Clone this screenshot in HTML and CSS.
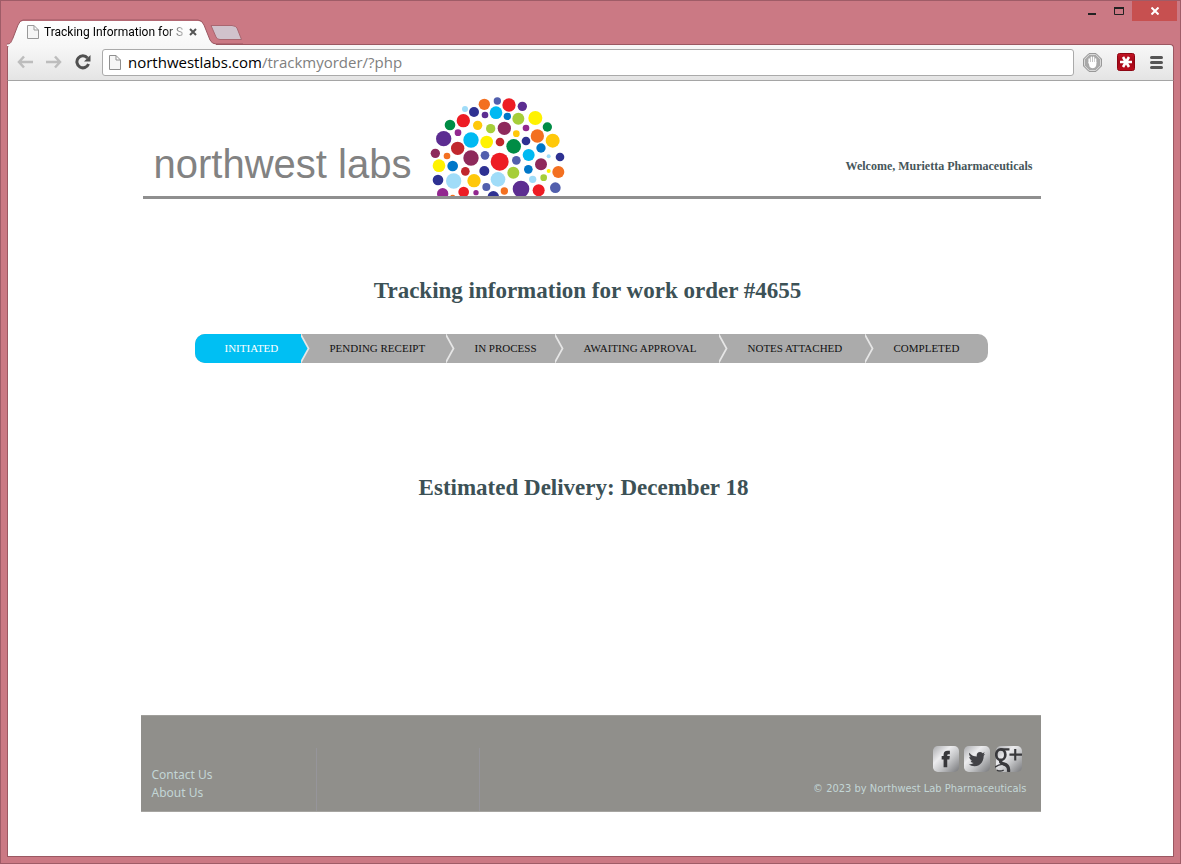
FILE: index.html
```html
<!DOCTYPE html>
<html lang="en">
<head>
<meta charset="utf-8">
<title>Tracking Information for S</title>
<link rel="stylesheet" href="styles.css">
</head>
<body>
<div class="window">
  <div class="titlebar">
    <div class="tabs">
      <svg class="tab-shape" width="236" height="27" viewBox="0 0 236 27" aria-hidden="true">
        <defs><linearGradient id="tabfill" x1="0" y1="0" x2="0" y2="1"><stop offset="0" stop-color="#fff"/><stop offset="1" stop-color="#f7f7f7"/></linearGradient></defs>
        <path d="M0 25C4 25 4 23 6 19L11 6Q13 2 16 2H191Q195 2 197 6L203 21Q205 25 209 25V27H0Z" fill="url(#tabfill)"/>
        <path d="M0 25C4 25 4 23 6 19L11 6Q13 1 16 1H191Q195 1 197 6L203 21Q205 25 209 25H236" fill="none" stroke="#9b5862"/>
        <path d="M204 6.500H225Q229 7 230 9L234.500 20.500H213Q210 20.500 209 18Z" fill="#d0c2cc" stroke="#a96670"/>
      </svg>
      <div class="tab">
        <svg width="12" height="14" viewBox="0 0 12 14" aria-hidden="true"><path d="M.5.5H7L11.500 5V13.500H.5ZM7 .5V5H11.500" fill="#f6f6f6" stroke="#999"/></svg>
        <span class="tab-title">Tracking Information for S</span>
        <button class="plain" aria-label="Close tab"><svg width="8" height="8" viewBox="0 0 8 8"><path d="M1 1L7 7M7 1L1 7" stroke="#555" stroke-width="2"/></svg></button>
      </div>
    </div>
    <div class="controls">
      <button class="control" aria-label="Minimize"><svg width="8" height="12" viewBox="0 0 8 12"><path d="M0 9H8" stroke="#222" stroke-width="2"/></svg></button>
      <button class="control" aria-label="Maximize"><svg width="10" height="8" viewBox="0 0 10 8"><path d="M.5 1H9.500V7.500H.5Z" fill="none" stroke="#222"/><path d="M0 1H10" stroke="#222" stroke-width="2"/></svg></button>
      <button class="control close" aria-label="Close"><svg width="8" height="8" viewBox="0 0 8 8"><path d="M.5 .5L7.500 7.500M7.500 .5L.5 7.500" stroke="#fff" stroke-width="2"/></svg></button>
    </div>
  </div>
  <div class="toolbar">
    <button class="plain" aria-label="Back"><svg width="16" height="14" viewBox="0 0 16 14"><path d="M7 1.500L2 7L7 12.500M2 7H16" fill="none" stroke="#bdbdbd" stroke-width="2.500"/></svg></button>
    <button class="plain" aria-label="Forward"><svg width="16" height="14" viewBox="0 0 16 14"><path d="M9 1.500L14 7L9 12.500M14 7H0" fill="none" stroke="#bdbdbd" stroke-width="2.500"/></svg></button>
    <button class="plain" aria-label="Reload"><svg width="16" height="16" viewBox="0 0 16 16"><path d="M12.500 4A6 6 0 1 0 13.500 10" fill="none" stroke="#505050" stroke-width="3"/><path d="M15.500 1V7.500H9Z" fill="#505050"/></svg></button>
    <div class="address">
      <svg width="12" height="15" viewBox="0 0 12 15" aria-hidden="true"><path d="M.5.5H7L11.500 5V14.500H.5ZM7 .5V5H11.500" fill="#f6f6f6" stroke="#8f8f8f"/></svg>
      <span class="url" role="textbox" aria-label="Address" contenteditable="true" spellcheck="false">northwestlabs.com<span class="path">/trackmyorder/?php</span></span>
    </div>
    <div class="extensions">
      <button class="plain" aria-label="Ad blocker"><svg width="19" height="19" viewBox="0 0 19 19"><path d="M6 .5H13L18.500 6V13L13 18.500H6L.5 13V6Z" fill="#a9a9a9" stroke="#999"/><path d="M6.400 1.500H12.600L17.500 6.400V12.600L12.600 17.500H6.400L1.500 12.600V6.400Z" fill="none" stroke="#d9d9d9"/><path d="M6.200 10V6M8.400 9V4.200M10.600 9V4.200M12.600 10V6" stroke="#fff" stroke-width="1.500" stroke-linecap="round"/><path d="M5.500 9H13.300V12Q12.500 15.300 9.500 15.300Q7.500 15.300 6.500 13.500Z" fill="#fff"/></svg></button>
      <button class="plain" aria-label="Password manager"><svg width="18" height="18" viewBox="0 0 18 18"><defs><linearGradient id="red" x1="0" y1="0" x2="0" y2="1"><stop offset="0" stop-color="#c41424"/><stop offset=".5" stop-color="#a20718"/><stop offset="1" stop-color="#bd0d1d"/></linearGradient></defs><rect x=".5" y=".5" width="17" height="17" rx="2" fill="url(#red)" stroke="#8d0613"/><path d="M3 9H15M6 4L12 14M12 4L6 14" stroke="#fff" stroke-width="2.600"/></svg></button>
      <button class="plain" aria-label="Menu"><svg width="13" height="13" viewBox="0 0 13 13"><path d="M1.500 1.500H11.500M1.500 6.500H11.500M1.500 11.500H11.500" stroke="#555" stroke-width="3" stroke-linecap="round"/></svg></button>
    </div>
  </div>
  <div class="viewport">
    <div class="page">
      <header class="header">
        <div class="brand">northwest labs</div>
        <svg class="dots" width="145" height="106" viewBox="0 0 435 318" role="img" aria-label="Northwest Labs">
          <g fill="#f37021"><circle cx="178" cy="43" r="17"/><circle cx="337" cy="138" r="20"/><circle cx="66" cy="198" r="10"/><circle cx="400" cy="246" r="18"/><circle cx="238" cy="303" r="11"/><circle cx="83" cy="322" r="8"/></g>
          <g fill="#ed1c24"><circle cx="252" cy="45" r="20"/><circle cx="115" cy="92" r="20"/><circle cx="224" cy="215" r="27"/><circle cx="116" cy="306" r="16"/><circle cx="341" cy="301" r="18"/></g>
          <g fill="#c1272d"><circle cx="225" cy="156" r="13"/><circle cx="98" cy="175" r="20"/><circle cx="121" cy="244" r="13"/></g>
          <g fill="#5c2d91"><circle cx="292" cy="49" r="14"/><circle cx="180" cy="75" r="10"/><circle cx="56" cy="146" r="23"/><circle cx="288" cy="297" r="25"/></g>
          <g fill="#525fad"><circle cx="217" cy="33" r="11"/><circle cx="180" cy="196" r="13"/><circle cx="274" cy="211" r="13"/><circle cx="184" cy="291" r="12"/><circle cx="391" cy="293" r="16"/></g>
          <g fill="#2e3192"><circle cx="147" cy="66" r="15"/><circle cx="303" cy="153" r="13"/><circle cx="405" cy="201" r="13"/><circle cx="178" cy="243" r="15"/><circle cx="39" cy="270" r="16"/><circle cx="205" cy="320" r="17"/></g>
          <g fill="#00b9f2"><circle cx="213" cy="68" r="19"/><circle cx="138" cy="150" r="23"/><circle cx="311" cy="195" r="18"/></g>
          <g fill="#0077c8"><circle cx="247" cy="79" r="11"/><circle cx="348" cy="174" r="14"/><circle cx="83" cy="228" r="16"/><circle cx="310" cy="238" r="13"/></g>
          <g fill="#a0dcf8"><circle cx="120" cy="57" r="9"/><circle cx="371" cy="199" r="6"/><circle cx="86" cy="273" r="23"/><circle cx="219" cy="268" r="22"/><circle cx="323" cy="268" r="11"/></g>
          <g fill="#a6ce39"><circle cx="280" cy="86" r="18"/><circle cx="197" cy="116" r="14"/><circle cx="265" cy="248" r="18"/><circle cx="356" cy="263" r="10"/></g>
          <g fill="#fff200"><circle cx="331" cy="84" r="21"/><circle cx="185" cy="156" r="19"/><circle cx="42" cy="227" r="19"/><circle cx="371" cy="243" r="6"/></g>
          <g fill="#ffc80a"><circle cx="158" cy="106" r="14"/><circle cx="274" cy="131" r="10"/><circle cx="383" cy="152" r="21"/><circle cx="147" cy="272" r="20"/></g>
          <g fill="#008c45"><circle cx="75" cy="105" r="16"/><circle cx="367" cy="111" r="14"/><circle cx="266" cy="169" r="22"/></g>
          <g fill="#8e2a5b"><circle cx="238" cy="115" r="20"/><circle cx="31" cy="190" r="14"/><circle cx="138" cy="204" r="23"/><circle cx="348" cy="223" r="18"/></g>
          <g fill="#92278f"><circle cx="99" cy="128" r="10"/><circle cx="303" cy="114" r="10"/><circle cx="53" cy="311" r="17"/><circle cx="153" cy="308" r="8"/></g>
        </svg>
        <p class="welcome">Welcome, Murietta Pharmaceuticals</p>
      </header>
      <main class="main">
        <h1 class="title">Tracking information for work order #4655</h1>
        <ol class="steps">
          <li class="step current" aria-current="step">INITIATED</li>
          <li class="step">PENDING RECEIPT</li>
          <li class="step">IN PROCESS</li>
          <li class="step">AWAITING APPROVAL</li>
          <li class="step">NOTES ATTACHED</li>
          <li class="step">COMPLETED</li>
        </ol>
        <h2 class="delivery">Estimated Delivery: December 18</h2>
      </main>
      <footer class="footer">
        <nav class="links"><a href="#">Contact Us</a><a href="#">About Us</a></nav>
        <div class="column"></div>
        <div class="legal">
          <div class="social">
            <a href="#" aria-label="Facebook"><svg width="26" height="26" viewBox="0 0 27 27"><defs><linearGradient id="silver" x1="0" y1="0" x2="1" y2="1"><stop offset="0" stop-color="#a9aaad"/><stop offset=".35" stop-color="#ececee"/><stop offset=".6" stop-color="#c5c6c8"/><stop offset="1" stop-color="#77787b"/></linearGradient></defs><rect width="27" height="27" rx="5" fill="url(#silver)"/><path d="M11 22V14H9V10.500H11V9Q11 5 15 5H17.500V8.500H16Q14.800 8.500 14.800 9.700V10.500H17.500L17 14H14.800V22Z" fill="#38383b"/></svg></a>
            <a href="#" aria-label="Twitter"><svg width="26" height="26" viewBox="0 0 27 27"><rect width="27" height="27" rx="5" fill="url(#silver)"/><path d="M5.500 7Q9 11 13.300 11Q12.700 6.500 16.700 6.300Q18.200 6.300 19.300 7.400L21.500 6.500L20.300 8.700L22 8.300L20.500 10.200C20.500 17 16 21 11 21Q7.500 21 5 19.200Q8 19.300 10 17.700Q7.500 17.400 6.700 15.200H8.300Q5.600 14.200 5.300 11.200L7 11.700Q4.500 9.500 5.500 7Z" fill="#424246"/></svg></a>
            <a href="#" aria-label="Google Plus"><svg width="27" height="26" viewBox="0 0 28 27"><rect x="1" width="27" height="27" rx="5" fill="url(#silver)"/><g fill="none" stroke="#38383b"><ellipse cx="6" cy="9" rx="4.700" ry="5.500" stroke-width="2.800"/><path d="M6 3.500H15M21 3V15M15 9H28" stroke-width="2.200"/><path d="M6 15Q5 17.500 9 18.500Q15 20 14 27" stroke-width="3.400"/><path d="M0 22Q5 18 10 19.500M2 25Q5 27 9 25" stroke-width="1.500"/></g></svg></a>
          </div>
          <small class="copyright">© 2023 by Northwest Lab Pharmaceuticals</small>
        </div>
      </footer>
    </div>
  </div>
</div>
</body>
</html>
```
FILE: styles.css
```css
* { box-sizing: border-box; }
body { margin: 0; }
svg { display: block; }
button { padding: 0; border: 0; background: none; }

.window {
  display: flex;
  flex-direction: column;
  min-height: 100vh;
  padding: 0 6px 6px;
  border: 1px solid #9f5c67;
  background: #cb7984;
  font-family: "Open Sans", "Noto Sans", sans-serif;
}

/* Title bar */
.titlebar { display: flex; justify-content: space-between; height: 43px; }
.tabs { position: relative; align-self: flex-end; width: 236px; height: 25px; }
.tab-shape { position: absolute; left: 0; top: 0; }
.tab { position: relative; display: flex; align-items: center; gap: 5px; height: 25px; padding-left: 20px; }
.tab-title {
  width: 140px;
  white-space: nowrap;
  font-family: Roboto, "Open Sans", sans-serif;
  font-size: 12px;
  line-height: 16px;
  -webkit-mask-image: linear-gradient(to right, #000 120px, transparent 146px);
  mask-image: linear-gradient(to right, #000 120px, transparent 146px);
}
.controls { display: flex; height: 20px; margin-right: -3px; }
.control { display: flex; align-items: center; justify-content: center; width: 27px; }
.close { width: 45px; background: #c75050; }

/* Toolbar */
.toolbar {
  display: flex;
  align-items: center;
  height: 37px;
  gap: 13px;
  padding: 0 10px 1px 9px;
  border: 1px solid #9b5862;
  border-bottom-color: #a5a5a5;
  border-radius: 4px 4px 0 0;
  background: linear-gradient(#f8f8f8, #e4e4e4);
}
.address {
  display: flex;
  flex: 1;
  align-items: center;
  gap: 7px;
  height: 27px;
  margin-left: -2px;
  padding-left: 6px;
  border: 1px solid #aaa;
  border-radius: 3px;
  background: #fff;
}
.url { outline: 0; font-size: 15px; line-height: 20px; color: #000; }
.path { color: #808080; }
.extensions { display: flex; align-items: center; gap: 15px; margin-left: -4px; }

/* Page */
.viewport {
  display: flex;
  flex: 1;
  justify-content: center;
  border: 1px solid #9b5862;
  border-top: 0;
  background: #fff;
}
.page { display: flex; flex: 1; flex-direction: column; max-width: 900px; padding-bottom: 44px; }
.header {
  display: flex;
  align-items: flex-end;
  margin-left: 2px;
  padding: 9px 8px 0 11px;
  border-bottom: 3px solid #8f8f8f;
}
.brand {
  width: 271px;
  padding-bottom: 4px;
  white-space: nowrap;
  font: 40px/56px "Liberation Sans", sans-serif;
  color: #828282;
}
.welcome {
  flex: 1;
  margin: 0 0 22px;
  text-align: right;
  font: bold 12px/16px "Liberation Serif", serif;
  color: #46565a;
}

.main { display: flex; flex: 1; flex-direction: column; font-family: "Liberation Serif", serif; }
.title, .delivery { margin: 0; text-align: center; font-size: 23px; line-height: 32px; color: #3c5156; }
.title { padding: 76px 6px 0 0; }
.delivery { padding: 109px 14px 0 0; }
.steps {
  display: grid;
  grid-template-columns: 106fr 145fr 109fr 164fr 146fr 123fr;
  margin: 27px 53px 0 54px;
  padding: 0;
  overflow: hidden;
  border-radius: 10px;
  list-style: none;
  background: #ababab;
}
.step { position: relative; padding-left: 29px; font-size: 11px; line-height: 29px; white-space: nowrap; color: #111; }
.current { padding-left: 30px; background: #00bff3; color: #fff; }
/* Chevron divider that overhangs the following step */
.step:not(:last-child)::before,
.step:not(:last-child)::after {
  content: "";
  position: absolute;
  top: 0;
  left: 100%;
  width: 9px;
  height: 100%;
  background: #e6e6e6;
  clip-path: polygon(0 0, 1px 0, 100% 50%, 1px 100%, 0 100%);
}
.step:not(:last-child)::after { left: calc(100% - 2px); background: #ababab; }
.step.current::after { background: #00bff3; }

/* Footer */
.footer {
  display: grid;
  grid-template-columns: 176px 163px 1fr;
  height: 97px;
  padding-top: 32px;
  border-top: 1px solid #a09f9b;
  border-bottom: 1px solid #a6a5a1;
  background: #908f8b;
  font-family: "DejaVu Sans Condensed", "Noto Sans", sans-serif;
}
.links { display: flex; flex-direction: column; padding: 18px 0 0 11px; border-right: 1px solid #96959a; }
.links a { font: 12px/18px "Noto Sans", sans-serif; text-decoration: none; color: #c3d6d6; }
.column { border-right: 1px solid #96959a; }
.legal { display: flex; flex-direction: column; align-items: flex-end; gap: 8px; padding-right: 14px; margin-top: -2px; }
.social { display: flex; gap: 5px; padding-right: 5px; }
.copyright { font-size: 11px; line-height: 18px; color: #c3d6d6; }
```
